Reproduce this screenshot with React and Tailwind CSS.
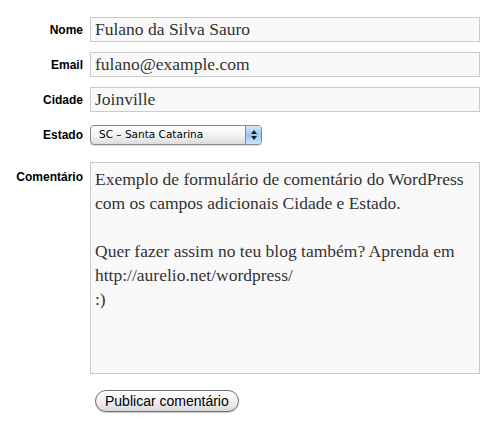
export default function App() {
  const label = "w-[90px] shrink-0 text-right pr-[7px] text-[12px] font-bold text-black font-['Liberation_Sans',Arial,sans-serif]";
  const input = "w-[390px] h-[25px] border border-[#cccccc] bg-[#f9f9f9] px-[4px] text-[17.5px] text-[#333333] font-['Liberation_Serif',Georgia,serif] leading-[23px] outline-none";
  return (
    <div className="w-[500px] h-[430px] bg-white pt-[17px] flex flex-col">
      <div className="flex items-center">
        <label className={label}>Nome</label>
        <input className={input} defaultValue="Fulano da Silva Sauro" />
      </div>
      <div className="flex items-center mt-[10px]">
        <label className={label}>Email</label>
        <input className={input} defaultValue="fulano@example.com" />
      </div>
      <div className="flex items-center mt-[10px]">
        <label className={label}>Cidade</label>
        <input className={input} defaultValue="Joinville" />
      </div>
      <div className="flex items-center mt-[13px]">
        <label className={label}>Estado</label>
        <div className="relative w-[172px] h-[20px] rounded-[4px] border border-[#8a8a8a] bg-gradient-to-b from-white via-[#f4f4f4] to-[#dcdcdc] shadow-[0_1px_1px_rgba(0,0,0,0.15)] flex items-center overflow-hidden">
          <span className="pl-[8px] text-[10.5px] text-black font-['DejaVu_Sans',sans-serif]">SC – Santa Catarina</span>
          <div className="absolute right-0 top-0 bottom-0 w-[16px] border-l border-[#7a8fb0] bg-gradient-to-b from-[#d6e8fb] via-[#9cc6f2] to-[#c9e2fb] flex flex-col items-center justify-center gap-[2px]">
            <svg width="6" height="4" viewBox="0 0 6 4"><path d="M3 0 L6 4 L0 4 Z" fill="#1a1a1a" /></svg>
            <svg width="6" height="4" viewBox="0 0 6 4"><path d="M0 0 L6 0 L3 4 Z" fill="#1a1a1a" /></svg>
          </div>
        </div>
      </div>
      <div className="flex items-start mt-[17px]">
        <label className={label + " pt-[6px]"}>Comentário</label>
        <textarea
          className="w-[390px] h-[212px] border border-[#cccccc] bg-[#f9f9f9] px-[4px] pt-[4px] text-[17.5px] text-[#333333] font-['Liberation_Serif',Georgia,serif] leading-[24px] outline-none resize-none"
          defaultValue={"Exemplo de formulário de comentário do WordPress com os campos adicionais Cidade e Estado.\n\nQuer fazer assim no teu blog também? Aprenda em http://aurelio.net/wordpress/\n:)"}
        />
      </div>
      <div className="flex mt-[16px] pl-[95px]">
        <button className="h-[22px] px-[9px] rounded-full border border-[#6f6f6f] bg-gradient-to-b from-white via-[#f2f2f2] to-[#d9d9d9] shadow-[0_1px_1px_rgba(0,0,0,0.2)] text-[14px] text-black font-['Liberation_Sans',Arial,sans-serif] leading-none">
          Publicar comentário
        </button>
      </div>
    </div>
  );
}
